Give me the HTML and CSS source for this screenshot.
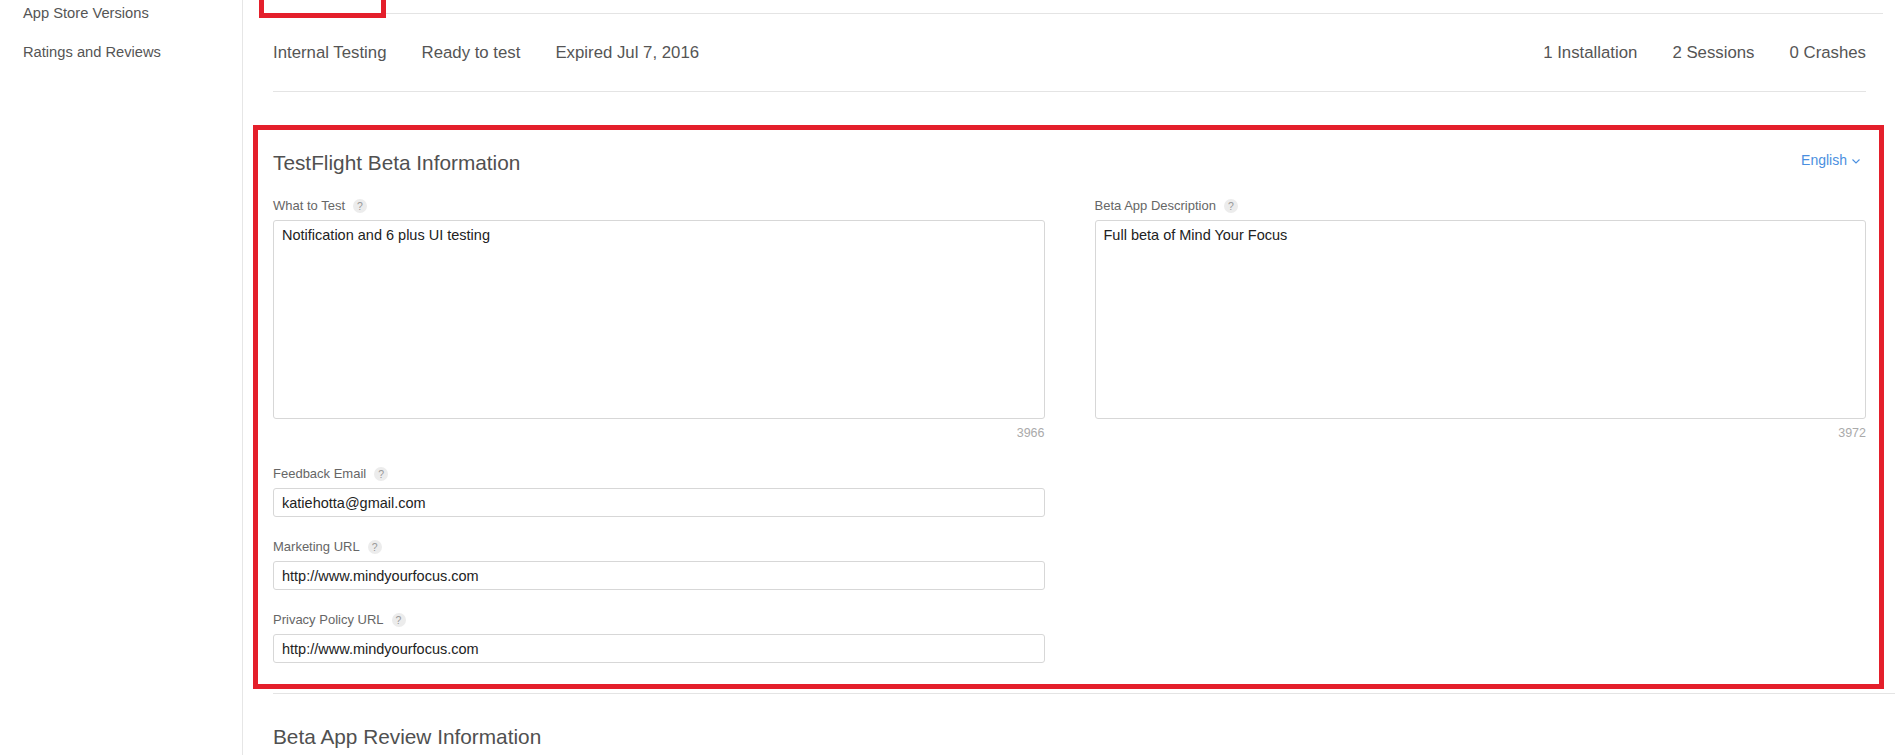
FILE: index.html
```html
<!DOCTYPE html>
<html lang="en">
<head>
<meta charset="utf-8">
<title>TestFlight</title>
<link rel="stylesheet" href="styles.css">
</head>
<body>
<div class="layout">
  <nav class="sidebar">
    <a class="side-item">App Store Versions</a>
    <a class="side-item">Ratings and Reviews</a>
  </nav>
  <main class="main">
    <div class="tabs">
      <span class="mark mark-tab"></span>
    </div>
    <div class="build-row">
      <div class="build-meta">
        <span>Internal Testing</span>
        <span>Ready to test</span>
        <span>Expired Jul 7, 2016</span>
      </div>
      <div class="build-meta">
        <span>1 Installation</span>
        <span>2 Sessions</span>
        <span>0 Crashes</span>
      </div>
    </div>
    <section class="section section-info">
      <span class="mark mark-section"></span>
      <div class="section-head">
        <h2 class="section-title">TestFlight Beta Information</h2>
        <a class="lang">English <svg class="chev" width="8" height="5" viewBox="0 0 8 5"><polyline points="0.5,0.5 4,4 7.5,0.5" fill="none" stroke="#4a8fe0" stroke-width="1.1"/></svg></a>
      </div>
      <div class="grid">
        <div class="col">
          <div class="field">
            <label class="label">What to Test <span class="help">?</span></label>
            <textarea class="area">Notification and 6 plus UI testing</textarea>
            <div class="count">3966</div>
          </div>
          <div class="field field-gap">
            <label class="label">Feedback Email <span class="help">?</span></label>
            <input class="input" type="text" value="katiehotta@gmail.com">
          </div>
          <div class="field field-next">
            <label class="label">Marketing URL <span class="help">?</span></label>
            <input class="input" type="text" value="http://www.mindyourfocus.com">
          </div>
          <div class="field field-next">
            <label class="label">Privacy Policy URL <span class="help">?</span></label>
            <input class="input" type="text" value="http://www.mindyourfocus.com">
          </div>
        </div>
        <div class="col">
          <div class="field">
            <label class="label">Beta App Description <span class="help">?</span></label>
            <textarea class="area">Full beta of Mind Your Focus</textarea>
            <div class="count">3972</div>
          </div>
        </div>
      </div>
    </section>
    <section class="section section-review">
      <h2 class="section-title">Beta App Review Information</h2>
    </section>
  </main>
</div>
</body>
</html>
```

FILE: styles.css
```css
* { box-sizing: border-box; }
html, body { margin: 0; padding: 0; }
body {
  font-family: "Liberation Sans", Arial, sans-serif;
  color: #555;
  background: #fff;
  width: 1895px;
  height: 755px;
  overflow: hidden;
}
.layout { display: flex; min-height: 755px; }
.sidebar {
  width: 243px;
  flex: none;
  border-right: 1px solid #e6e6e6;
  padding: 3px 0 0 23px;
  display: flex;
  flex-direction: column;
  gap: 19px;
}
.side-item {
  font-size: 14.7px;
  line-height: 20px;
  color: #555;
}
.main {
  flex: 1;
  padding: 0 29px 0 30px;
  min-width: 0;
}
.tabs {
  position: relative;
  height: 14px;
  border-bottom: 1px solid #e4e4e4;
  margin-right: -17px;
}
.mark {
  position: absolute;
  border: 5px solid #e41f2b;
  pointer-events: none;
}
.mark-tab { left: -14px; top: -20px; width: 127px; height: 38px; }
.build-row {
  display: flex;
  justify-content: space-between;
  align-items: center;
  height: 78px;
  border-bottom: 1px solid #e4e4e4;
  font-size: 16.8px;
  color: #555;
}
.build-meta { display: flex; gap: 35px; }
.section { position: relative; }
.section-info {
  padding-top: 59px;
  padding-bottom: 30px;
  margin-right: -29px;
  padding-right: 29px;
  border-bottom: 1px solid #e4e4e4;
}
.mark-section { left: -20px; right: 11px; top: 33px; bottom: 4px; }
.section-head {
  display: flex;
  justify-content: space-between;
  align-items: flex-start;
  height: 24px;
}
.section-title {
  margin: 0;
  font-size: 20.8px;
  line-height: 24px;
  font-weight: normal;
  color: #505050;
}
.lang {
  font-size: 14px;
  line-height: 18px;
  color: #4a8fe0;
  margin-right: 6px;
  display: flex;
  align-items: center;
  gap: 5px;
}
.chev { margin-top: 2px; }
.grid {
  display: grid;
  grid-template-columns: 1fr 1fr;
  column-gap: 50px;
  margin-top: 24px;
}
.col { display: flex; flex-direction: column; }
.field { display: flex; flex-direction: column; }
.field-gap { margin-top: 27px; }
.field-next { margin-top: 23px; }
.label {
  font-size: 13px;
  line-height: 14px;
  color: #666;
  margin-bottom: 7px;
  display: flex;
  align-items: center;
}
.help {
  display: inline-flex;
  align-items: center;
  justify-content: center;
  width: 14px;
  height: 14px;
  border-radius: 50%;
  background: #ececec;
  color: #999;
  font-size: 10.5px;
  margin-left: 8px;
}
.area, .input {
  display: block;
  width: 100%;
  font-family: "Liberation Sans", Arial, sans-serif;
  font-size: 14.5px;
  color: #222;
  border: 1px solid #d7d7d7;
  border-radius: 3px;
  background: #fff;
  padding: 0 8px;
  margin: 0;
  outline: none;
}
.area {
  height: 199px;
  resize: none;
  line-height: 17px;
  padding-top: 6px;
  overflow: hidden;
}
.input { height: 29px; line-height: 27px; }
.count {
  margin-top: 7px;
  text-align: right;
  font-size: 12.5px;
  line-height: 14px;
  color: #aaa;
}
.section-review { padding-top: 31px; }
```
